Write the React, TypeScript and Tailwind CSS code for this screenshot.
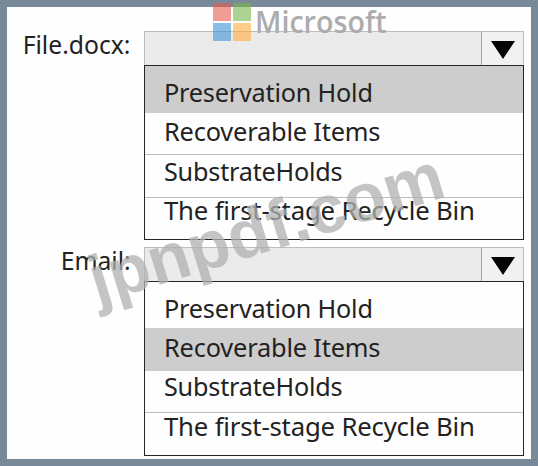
import React from "react";

type Row = { text: string; box: string; label: string };

const firstRows: Row[] = [
  { text: "Preservation Hold", box: "h-[47px] pt-[14px] bg-[#cdcdcd]", label: "scale-x-[0.97]" },
  { text: "Recoverable Items", box: "h-[42px] pt-[6px] border-b border-[#bdbdbd]", label: "scale-x-[0.976]" },
  { text: "SubstrateHolds", box: "h-[43px] pt-[4px] border-b border-[#bdbdbd]", label: "scale-x-[0.968]" },
  { text: "The first-stage Recycle Bin", box: "h-[41px]", label: "scale-x-[0.99]" },
];

const secondRows: Row[] = [
  { text: "Preservation Hold", box: "h-[46px] pt-[14px]", label: "scale-x-[0.97]" },
  { text: "Recoverable Items", box: "h-[43px] pt-[7px] bg-[#cdcdcd]", label: "scale-x-[0.976]" },
  { text: "SubstrateHolds", box: "h-[42px] pt-[3px] border-b border-[#bdbdbd]", label: "scale-x-[0.968]" },
  { text: "The first-stage Recycle Bin", box: "h-[42px] pt-px", label: "scale-x-[0.99]" },
];

function Dropdown({ label, rows }: { label: string; rows: Row[] }) {
  return (
    <div className="flex">
      <div className="flex w-[137px] justify-end pr-[13.5px]">
        <span className="origin-right scale-x-[0.95] whitespace-nowrap leading-[26px]">{label}</span>
      </div>
      <div className="w-[380px]">
        <div className="flex h-[34px] border border-b-0 border-[#bdbdbd] bg-[#ebebeb]">
          <div className="flex-1" />
          <div className="flex w-[42px] justify-center border-l border-[#a8a8a8] bg-[#f1f1f1] pt-[9px]">
            <svg width="24" height="19" viewBox="0 0 24 19">
              <path d="M0 0H24L12 18Z" fill="#050505" />
            </svg>
          </div>
        </div>
        <div className="border border-[#252525]">
          {rows.map((row) => (
            <div key={row.text} className={`${row.box} pl-[19px]`}>
              <span className={`${row.label} block w-max origin-left whitespace-nowrap leading-6 tracking-[-0.2px]`}>{row.text}</span>
            </div>
          ))}
        </div>
      </div>
    </div>
  );
}

export default function App() {
  return (
    <div className="relative h-[466px] w-[538px] overflow-hidden bg-[#788999] pl-[7px] pt-[7px] font-['Noto_Sans',sans-serif] text-[26px] text-[#222]">
      <div className="flex h-[452px] w-[524px] flex-col gap-[7px] bg-[#fefefe] pt-[24px]">
        <Dropdown label="File.docx:" rows={firstRows} />
        <Dropdown label="Email:" rows={secondRows} />
      </div>
      <div className="absolute left-[213px] top-[3px] flex items-start gap-[4px]">
        <div className="grid grid-cols-[18px_18px] grid-rows-[18px_18px] gap-[2px] opacity-60">
          <i className="bg-[#e95c50]" />
          <i className="bg-[#79b74c]" />
          <i className="bg-[#3e94d4]" />
          <i className="bg-[#ffad39]" />
        </div>
        <span className="origin-left scale-x-[0.955] font-['Open_Sans',sans-serif] text-[30px] font-semibold leading-[38px] text-[#acacac]">Microsoft</span>
      </div>
      <div className="absolute left-[97px] top-[243px] origin-[0_60px] -rotate-[17.1deg] whitespace-nowrap font-['Liberation_Sans',sans-serif] text-[68px] font-bold leading-[75px] tracking-[0.1px] text-[#b0b0b0]/75">
        jpnpdf.com
      </div>
    </div>
  );
}
